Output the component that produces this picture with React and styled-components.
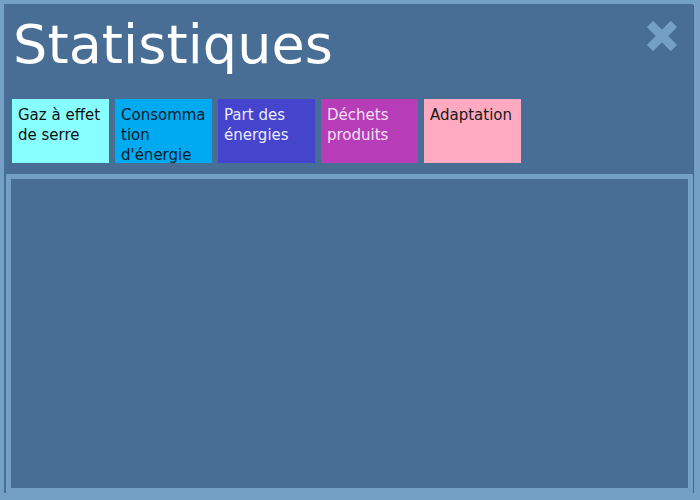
import React from 'react'
import styled, { createGlobalStyle } from 'styled-components'

const Global = createGlobalStyle`
    html, body {
        margin: 0;
        padding: 0;
        background: #75a0c5;
    }
    body {
        font-family: "DejaVu Sans", "Liberation Sans", sans-serif;
    }
`

const Panel = styled.div`
    position: relative;
    box-sizing: border-box;
    margin: 4px 0 0 4px;
    width: 689px;
    height: 489px;
    background: #486e96;
    box-shadow: 1px 1px 0 #41678f;
    padding-left: 2px;
    display: flex;
    flex-direction: column;
`

const Title = styled.h1`
    margin: 6px 0 0 7px;
    font-size: 54px;
    line-height: 70px;
    font-weight: normal;
    color: #ffffff;
    letter-spacing: 0.1px;
`

const Close = styled.button`
    position: absolute;
    top: 14px;
    right: 13px;
    width: 36px;
    height: 36px;
    padding: 0;
    border: none;
    background: none;
    cursor: pointer;
    display: flex;
    align-items: center;
    justify-content: center;
`

const Tabs = styled.div`
    display: flex;
    gap: 6px;
    margin: 19px 0 0 6px;
`

const Tab = styled.button`
    box-sizing: border-box;
    width: 97px;
    height: 64px;
    padding: 6px 5px 0 6px;
    border: none;
    background: ${p => p.bg};
    color: ${p => p.fg};
    font-family: "DejaVu Sans", "Liberation Sans", sans-serif;
    font-size: 15px;
    line-height: 20px;
    text-align: left;
    display: flex;
    align-items: flex-start;
    overflow-wrap: anywhere;
    word-break: break-word;
    cursor: pointer;
`

const Content = styled.div`
    flex: 1;
    margin-top: 11px;
    border: 5px solid #75a0c5;
    background: #486e96;
    box-shadow: 1px 1px 0 #41678f;
`

const tabs = [
    { label: "Gaz à effet de serre", bg: "#88ffff", fg: "#111111" },
    { label: "Consommation d'énergie", bg: "#00aaf0", fg: "#0a1a2a" },
    { label: "Part des énergies", bg: "#4444cc", fg: "#ececff" },
    { label: "Déchets produits", bg: "#b63cb8", fg: "#f4e0f4" },
    { label: "Adaptation", bg: "#ffaac0", fg: "#1a1a1a" },
]

const App = () => {
    return (
        <>
            <Global />
            <Panel>
                <Title>Statistiques</Title>
                <Close aria-label="Fermer">
                    <svg width="30" height="30" viewBox="0 0 30 30">
                        <path d="M3 3 L27 27 M27 3 L3 27" stroke="#75a0c5" strokeWidth="9" />
                    </svg>
                </Close>
                <Tabs>
                    {tabs.map(t => (
                        <Tab key={t.label} bg={t.bg} fg={t.fg}>{t.label}</Tab>
                    ))}
                </Tabs>
                <Content />
            </Panel>
        </>
    )
}

export default App
